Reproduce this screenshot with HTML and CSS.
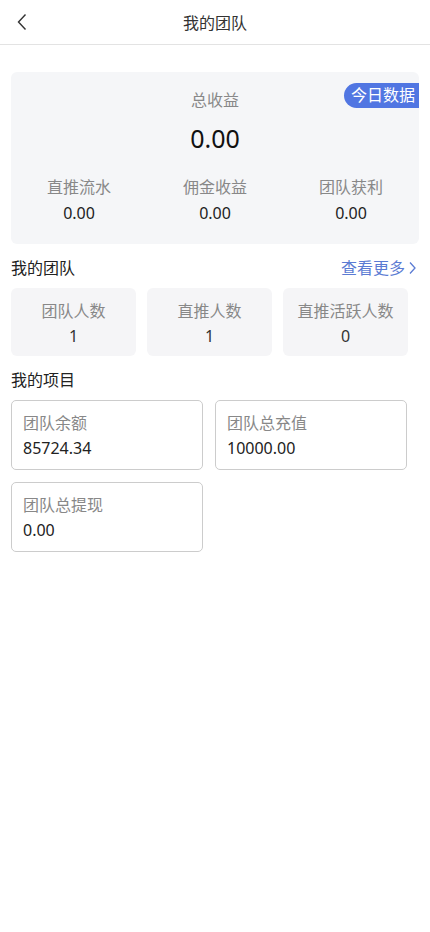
FILE: index.html
```html
<!DOCTYPE html>
<html lang="zh-CN">
<head>
  <meta charset="UTF-8">
  <meta name="viewport" content="width=device-width, initial-scale=1.0">
  <title>我的团队</title>
  <link rel="stylesheet" href="styles.css">
</head>
<body>

  <header class="topbar">
    <a class="topbar__back" href="#">
      <svg width="12" height="18" viewBox="0 0 12 18"><path d="M9.5 1.5 L2.5 9 L9.5 16.5" fill="none" stroke="#333" stroke-width="1.4"/></svg>
    </a>
    <h1 class="topbar__title">我的团队</h1>
  </header>

  <main class="page">

    <section class="summary">
      <span class="summary__badge">今日数据</span>
      <p class="summary__label">总收益</p>
      <p class="summary__total">0.00</p>
      <div class="summary__row">
        <div class="summary__item">
          <p class="summary__label">直推流水</p>
          <p class="summary__value">0.00</p>
        </div>
        <div class="summary__item">
          <p class="summary__label">佣金收益</p>
          <p class="summary__value">0.00</p>
        </div>
        <div class="summary__item">
          <p class="summary__label">团队获利</p>
          <p class="summary__value">0.00</p>
        </div>
      </div>
    </section>

    <div class="section-head">
      <h2 class="section-head__title">我的团队</h2>
      <a class="section-head__more" href="#">查看更多<svg width="9" height="14" viewBox="0 0 9 14"><path d="M2 1.5 L7 7 L2 12.5" fill="none" stroke="#5b7bd3" stroke-width="1.3"/></svg></a>
    </div>
    <div class="stats">
      <div class="stat">
        <p class="stat__label">团队人数</p>
        <p class="stat__value">1</p>
      </div>
      <div class="stat">
        <p class="stat__label">直推人数</p>
        <p class="stat__value">1</p>
      </div>
      <div class="stat">
        <p class="stat__label">直推活跃人数</p>
        <p class="stat__value">0</p>
      </div>
    </div>

    <div class="section-head">
      <h2 class="section-head__title">我的项目</h2>
    </div>
    <div class="projects">
      <div class="project">
        <p class="project__label">团队余额</p>
        <p class="project__value">85724.34</p>
      </div>
      <div class="project">
        <p class="project__label">团队总充值</p>
        <p class="project__value">10000.00</p>
      </div>
      <div class="project">
        <p class="project__label">团队总提现</p>
        <p class="project__value">0.00</p>
      </div>
    </div>

  </main>

</body>
</html>
```

FILE: styles.css
```css
* {
  box-sizing: border-box;
  margin: 0;
  padding: 0;
}
body {
  font-family: "Noto Sans", "Noto Sans CJK SC", sans-serif;
  font-size: 16px;
  line-height: 20px;
  color: #222;
  background: #fff;
}
a {
  text-decoration: none;
}

/* Top bar */

.topbar {
  position: relative;
  height: 45px;
  border-bottom: 1px solid #e3e3e3;
  display: flex;
  align-items: center;
  justify-content: center;
}
.topbar__back {
  position: absolute;
  left: 16px;
  top: 13px;
  display: flex;
}
.topbar__title {
  font-size: 16px;
  font-weight: 400;
  color: #333;
  margin-top: 2px;
}

.page {
  padding: 27px 11px 0;
}

/* Summary card */

.summary {
  position: relative;
  background: #f5f6f8;
  border-radius: 6px;
  padding: 18px 0 21px;
  text-align: center;
}
.summary__badge {
  position: absolute;
  top: 11px;
  right: 0;
  height: 25px;
  line-height: 25px;
  padding: 0 4px 0 7px;
  border-radius: 13px 0 0 13px;
  background: #5176e2;
  color: #fff;
  font-size: 16px;
}
.summary__label {
  color: #888;
}
.summary__total {
  margin-top: 10px;
  font-size: 25px;
  line-height: 36px;
  color: #111;
}
.summary__row {
  display: grid;
  grid-template-columns: repeat(3, 1fr);
  margin-top: 21px;
}
.summary__value {
  margin-top: 6px;
}

/* Section heads */

.section-head {
  display: flex;
  justify-content: space-between;
  align-items: center;
  margin-top: 14px;
}
.section-head__title {
  font-size: 16px;
  font-weight: 400;
  color: #222;
}
.section-head__more {
  display: flex;
  align-items: center;
  gap: 3px;
  color: #5b7bd3;
  margin-right: 2px;
}

/* Team stats */

.stats {
  display: grid;
  grid-template-columns: repeat(3, 125px);
  gap: 11px;
  margin-top: 10px;
}
.stat {
  background: #f5f5f7;
  border-radius: 6px;
  padding: 13px 0 10px;
  text-align: center;
}
.stat__label {
  color: #888;
}
.stat__value {
  margin-top: 5px;
  color: #333;
}

/* Projects */

.projects {
  display: grid;
  grid-template-columns: 192px 192px;
  gap: 12px;
  margin-top: 10px;
}
.project {
  border: 1px solid #ccc;
  border-radius: 5px;
  padding: 12px 11px 11px;
  height: 70px;
}
.project__label {
  color: #888;
}
.project__value {
  margin-top: 5px;
  color: #222;
}
```
